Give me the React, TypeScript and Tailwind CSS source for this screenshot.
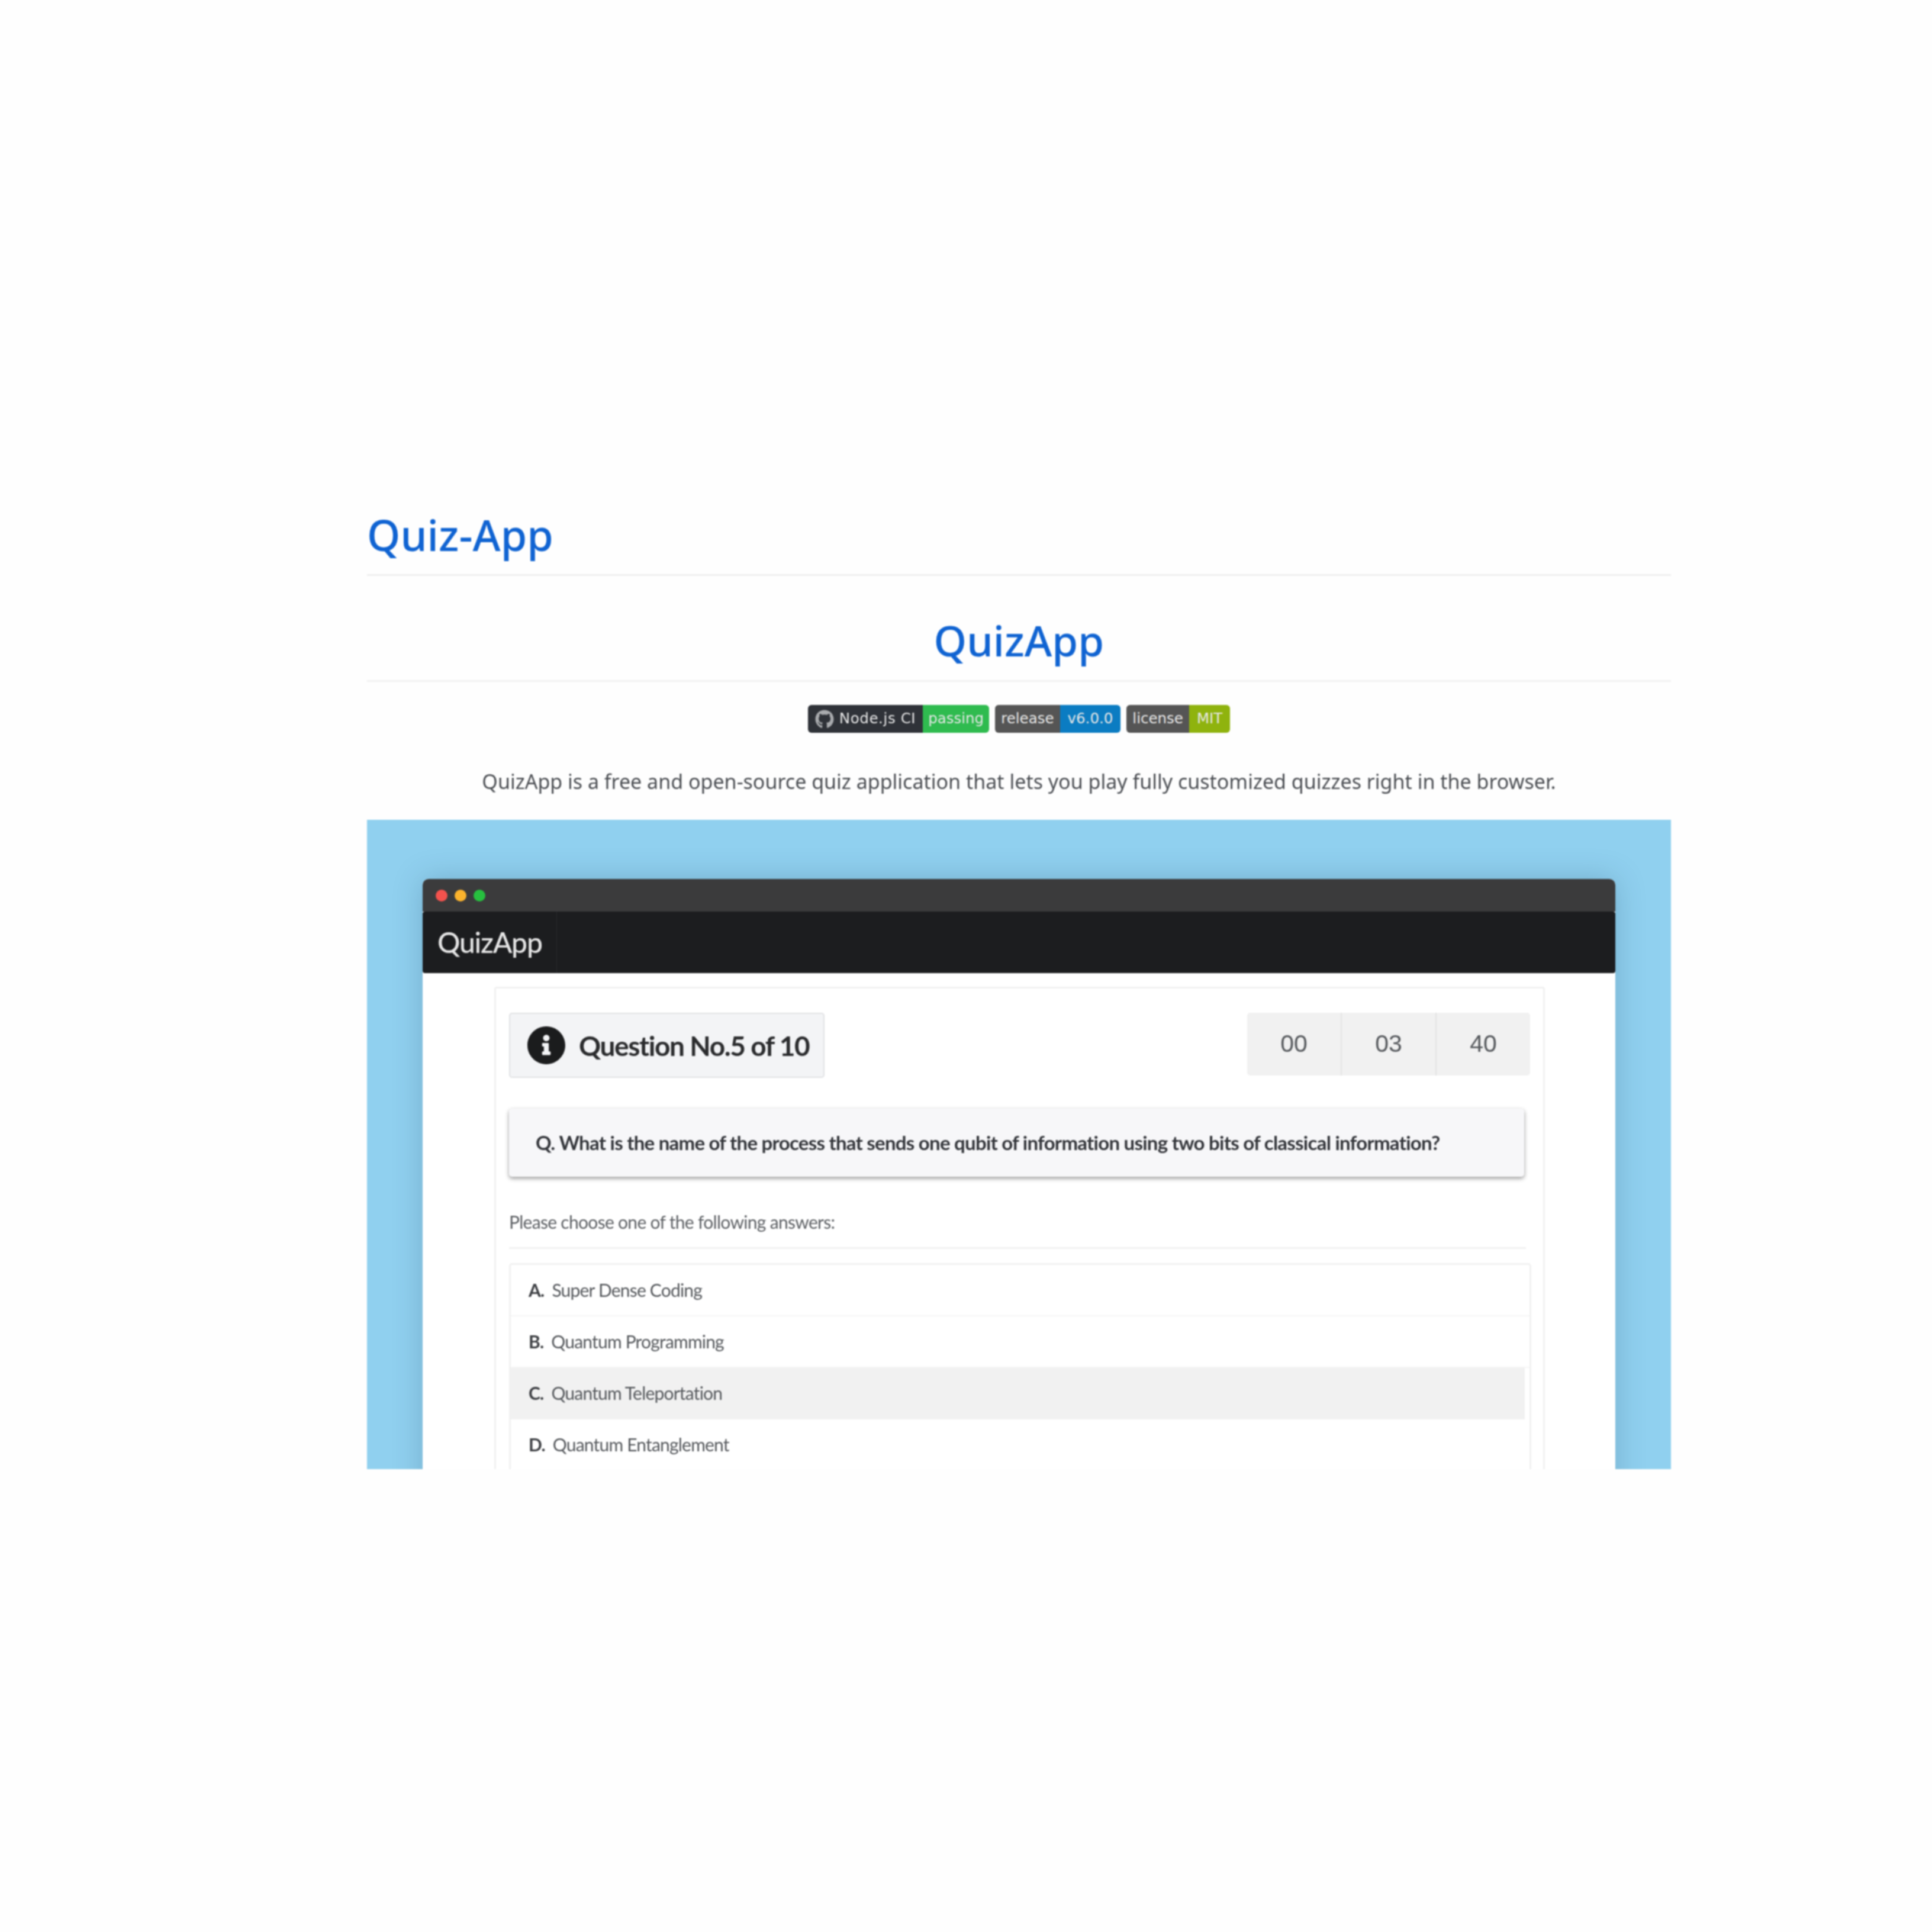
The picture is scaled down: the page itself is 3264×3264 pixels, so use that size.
import { FaGithub, FaInfoCircle } from "react-icons/fa";

const headingFont = "font-['Noto_Sans','Open_Sans',sans-serif]";
const lato = "font-['Lato',sans-serif]";
const verdana = "font-['DejaVu_Sans',sans-serif]";

const answers = [
  { key: "A.", text: "Super Dense Coding" },
  { key: "B.", text: "Quantum Programming" },
  { key: "C.", text: "Quantum Teleportation", active: true },
  { key: "D.", text: "Quantum Entanglement" },
];

function Badge({
  left,
  right,
  leftClass,
  rightClass,
  github,
}: {
  left: string;
  right: string;
  leftClass: string;
  rightClass: string;
  github?: boolean;
}) {
  return (
    <div className={`flex h-[47px] overflow-hidden rounded-[6px] text-[24.5px] text-[#e8e8e8] ${verdana}`}>
      <div className={`flex items-center gap-[9px] ${leftClass}`}>
        {github && <FaGithub className="h-[32px] w-[32px] text-[#a9abae]" />}
        {left}
      </div>
      <div className={`flex items-center ${rightClass}`}>{right}</div>
    </div>
  );
}

export default function App() {
  return (
    <div className="h-[3264px] w-[3264px] bg-[#fefefe] pl-[620px] pt-[860px]">
      <div className="w-[2203px] blur-[0.8px]">
        <h1 className={`h-[113px] border-b-[3px] border-[#efefef] pt-[1px] text-[72px] font-medium leading-[84px] text-[#0f63d2] ${headingFont}`}>
          Quiz-App
        </h1>

        <h2 className={`mt-[66px] h-[113px] border-b-[3px] border-[#f1f1f1] pt-[1px] text-center text-[71px] font-medium leading-[84px] text-[#0f63d2] ${headingFont}`}>
          QuizApp
        </h2>

        <div className="mt-[39px] flex justify-center gap-[10px]">
          <Badge github left="Node.js CI" right="passing" leftClass="bg-[#2f3238] px-[12px] tracking-[0.6px]" rightClass="bg-[#2fbb4f] px-[9px]" />
          <Badge left="release" right="v6.0.0" leftClass="bg-[#555555] px-[10px]" rightClass="bg-[#0b7cc2] px-[13px]" />
          <Badge left="license" right="MIT" leftClass="bg-[#555555] px-[10px]" rightClass="bg-[#8fb30e] px-[13px]" />
        </div>

        <p className={`mt-[57px] text-center text-[34px] leading-[50px] text-[#4a4d52] ${headingFont}`}>
          QuizApp is a free and open-source quiz application that lets you play fully customized quizzes right in the browser.
        </p>

        <div className="mt-[40px] h-[1097px] overflow-hidden bg-[#90d0ef] px-[94px] pt-[100px]">
          <div className="rounded-t-[10px] bg-white pb-[40px] shadow-[0_0_50px_rgba(30,70,100,0.25)]">
            <div className="flex h-[55px] items-center gap-[12px] rounded-t-[10px] bg-[#3b3b3c] pl-[22px]">
              <span className="h-[20px] w-[20px] rounded-full bg-[#f4524d]" />
              <span className="h-[20px] w-[20px] rounded-full bg-[#fbb32d]" />
              <span className="h-[20px] w-[20px] rounded-full bg-[#27c03f]" />
            </div>
            <div className="flex h-[104px] rounded-[4px] bg-[#1c1d1f]">
              <div className={`flex items-center border-r border-[#2a2b2d] pl-[25px] pr-[24px] text-[48px] font-medium tracking-[-1.2px] text-[#e6e6e6] ${lato}`}>
                QuizApp
              </div>
            </div>

            <div className="ml-[121px] mr-[119px] mt-[23px] rounded-[4px] border-[3px] border-b-0 border-[#f1f1f1] pb-[40px] pl-[22px] pr-[20px] pt-[41px]">
              <div className="flex justify-between">
                <div className="flex h-[110px] w-[533px] items-center gap-[22px] rounded-[5px] border-2 border-[#e1e2e4] bg-[#f3f4f6] pl-[28px]">
                  <FaInfoCircle className="h-[66px] w-[66px] text-[#1b1c1d]" />
                  <span className={`whitespace-nowrap text-[46px] font-bold tracking-[-1.4px] text-[#2a2b2d] ${lato}`}>
                    Question No.5 of 10
                  </span>
                </div>
                <div className="mr-[2px] flex h-[106px] w-[478px] rounded-[5px] bg-[#f1f1f1] font-['Liberation_Sans',sans-serif] text-[41px] text-[#55585c]">
                  <div className="flex flex-1 items-center justify-center border-r-2 border-[#e3e3e3]">00</div>
                  <div className="flex flex-1 items-center justify-center border-r-2 border-[#e3e3e3]">03</div>
                  <div className="flex flex-1 items-center justify-center">40</div>
                </div>
              </div>

              <div className="mt-[52px] flex h-[115px] w-[1715px] items-center rounded-[5px] bg-[#f7f7f9] pl-[45px] shadow-[0_3px_7px_rgba(0,0,0,0.4)]">
                <span className={`whitespace-nowrap text-[33px] font-bold tracking-[-0.75px] text-[#33353a] ${lato}`}>
                  Q. What is the name of the process that sends one qubit of information using two bits of classical information?
                </span>
              </div>

              <p className={`mt-[55px] text-[30px] leading-[42px] tracking-[-0.7px] text-[#5d6064] ${lato}`}>
                Please choose one of the following answers:
              </p>
              <div className="mt-[22px] h-[3px] w-[1718px] bg-[#f1f1f1]" />

              <div className="mt-[24px] rounded-[5px] border-[3px] border-[#f1f1f1]">
                {answers.map((a) => (
                  <div
                    key={a.key}
                    className={`flex h-[87px] items-center border-b-2 pl-[30px] text-[30px] tracking-[-0.8px] text-[#55585c] ${lato} ${
                      a.active ? "mr-[8px] border-transparent bg-[#f1f1f1]" : "border-[#f5f5f5]"
                    }`}
                  >
                    <b className="mr-[13px] font-bold text-[#3c3e42]">{a.key}</b>
                    {a.text}
                  </div>
                ))}
              </div>
            </div>
          </div>
        </div>
      </div>
    </div>
  );
}
